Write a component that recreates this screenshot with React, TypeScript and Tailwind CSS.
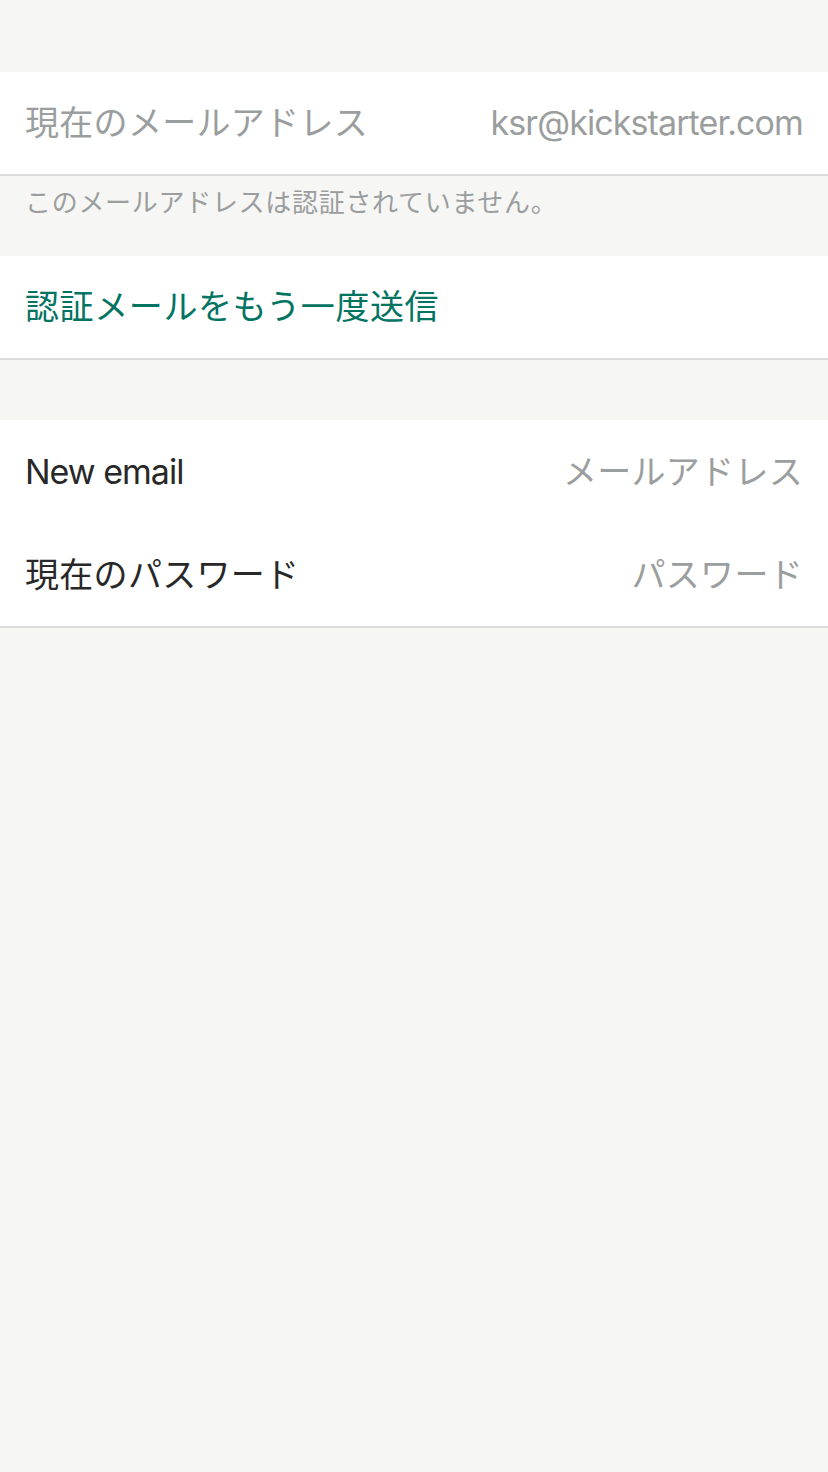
const font = { fontFamily: 'Inter, "Noto Sans CJK JP", sans-serif' };

function Row({
  label,
  value,
  labelClass,
  valueClass,
}: {
  label: string;
  value?: string;
  labelClass: string;
  valueClass?: string;
}) {
  return (
    <div className="flex h-[102px] items-center justify-between px-[25px] bg-white">
      <span className={`text-[34px] leading-none ${labelClass}`}>{label}</span>
      {value && (
        <span className={`text-[34px] leading-none ${valueClass}`}>{value}</span>
      )}
    </div>
  );
}

export default function App() {
  return (
    <div className="min-h-[1472px] w-[828px] bg-[#f6f6f4]" style={font}>
      <div className="h-[72px]" />

      <div className="border-b-2 border-[#dcdcdc]">
        <Row
          label="現在のメールアドレス"
          value="ksr@kickstarter.com"
          labelClass="text-[#9b9e9e] tracking-[0.3px]"
          valueClass="text-[#9b9e9e] tracking-[-0.9px]"
        />
      </div>
      <div className="h-[80px] px-[25px] pt-[12px]">
        <p className="text-[26px] leading-[30px] tracking-[0.7px] text-[#9b9e9e]">
          このメールアドレスは認証されていません。
        </p>
      </div>

      <div className="border-b-2 border-[#dcdcdc]">
        <Row label="認証メールをもう一度送信" labelClass="text-[#037362] tracking-[0.6px]" />
      </div>

      <div className="h-[60px]" />

      <div className="border-b-2 border-[#dcdcdc] bg-white">
        <div className="flex h-[103px] items-center justify-between px-[25px]">
          <span className="text-[34px] leading-none tracking-[-1px] text-[#282828]">New email</span>
          <span className="text-[34px] leading-none tracking-[0.3px] text-[#9b9e9e]">メールアドレス</span>
        </div>
        <div className="flex h-[103px] items-center justify-between px-[25px]">
          <span className="text-[34px] leading-none tracking-[0.3px] text-[#282828]">現在のパスワード</span>
          <span className="text-[34px] leading-none tracking-[0.3px] text-[#9b9e9e]">パスワード</span>
        </div>
      </div>
    </div>
  );
}
